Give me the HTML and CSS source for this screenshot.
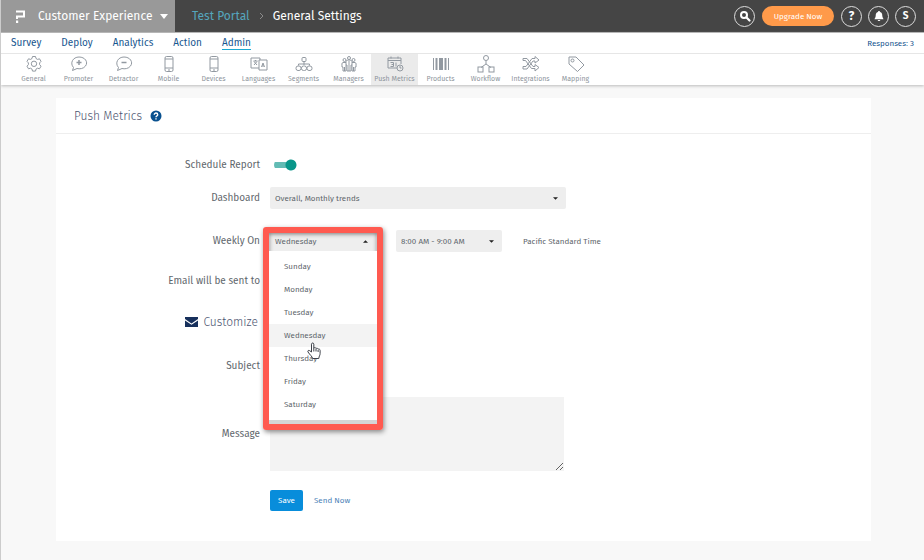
FILE: index.html
```html
<!DOCTYPE html>
<html lang="en">
<head>
<meta charset="utf-8">
<title>General Settings</title>
<link rel="stylesheet" href="styles.css">
</head>
<body>
<header class="topbar">
  <button class="product" type="button">
    <svg class="logo" viewBox="0 0 10 13" aria-hidden="true"><path d="M0 1.500h8v5H1v2.500" fill="none" stroke="#fff" stroke-width="2"/><path d="M0 10.500h2.200V13H0z" fill="#fff"/></svg>
    <span>Customer Experience</span>
    <svg class="down" viewBox="0 0 8 5" aria-hidden="true"><path d="M0 0h8L4 5z" fill="#fff"/></svg>
  </button>
  <nav class="crumbs" aria-label="Breadcrumb">
    <a href="#">Test Portal</a>
    <svg class="sep" viewBox="0 0 5 8" aria-hidden="true"><path d="M1 1l3 3-3 3" fill="none" stroke="#8a8a8a" stroke-width="1"/></svg>
    <span>General Settings</span>
  </nav>
  <div class="tools">
    <button class="round" type="button" aria-label="Search"><svg viewBox="0 0 12 12"><circle cx="5" cy="5" r="3" fill="none" stroke="#fff" stroke-width="2"/><path d="M7.500 7.500l3 3" stroke="#fff" stroke-width="2.200" stroke-linecap="round"/></svg></button>
    <button class="upgrade" type="button">Upgrade Now</button>
    <button class="round help" type="button">?</button>
    <button class="round" type="button" aria-label="Notifications"><svg viewBox="0 0 12 12"><path d="M6 1c-.7 0-1 .5-1 1C3 2.500 2.800 4 2.700 6 2.500 8 1.500 8.500 1.500 9.300h9C10.500 8.500 9.500 8 9.300 6 9.200 4 9 2.500 7 2c0-.5-.3-1-1-1zM4.700 9.900h2.600c0 1.500-2.600 1.500-2.600 0z" fill="#fff"/></svg></button>
    <button class="round" type="button">S</button>
  </div>
</header>
<div class="menus">
  <nav class="tabs" aria-label="Main">
    <a href="#">Survey</a><a href="#">Deploy</a><a href="#">Analytics</a><a href="#">Action</a><a href="#" class="current">Admin</a>
    <span class="responses">Responses: 3</span>
  </nav>
  <nav class="iconbar" aria-label="Admin">
    <a href="#"><svg viewBox="0 0 18 18"><path d="M7.500 1.500h3l.5 2 1.500.9 2-.6 1.500 2.600-1.400 1.500v1.700l1.400 1.600-1.500 2.600-2-.6-1.500.9-.5 2h-3l-.5-2-1.500-.9-2 .6L2 11.200l1.400-1.600V7.900L2 6.400l1.500-2.600 2 .6L7 3.500z"/><circle cx="9" cy="8.800" r="2.700"/></svg>General</a>
    <a href="#"><svg viewBox="0 0 18 18"><path d="M3.500 12.500C-.5 8 3 2 9 2s9.500 5 6.500 9c-2 2.800-6 3.200-8.500 2.500L2.500 15.500z"/><path d="M9 5v5M6.500 7.500h5" stroke-width="1.500"/></svg>Promoter</a>
    <a href="#"><svg viewBox="0 0 18 18"><path d="M3.500 12.500C-.5 8 3 2 9 2s9.500 5 6.500 9c-2 2.800-6 3.200-8.500 2.500L2.500 15.500z"/><path d="M6.500 7.500h5" stroke-width="1.500"/></svg>Detractor</a>
    <a href="#"><svg viewBox="0 0 18 18"><rect x="5" y="1.500" width="8" height="15" rx="1.500"/><path d="M5 4h8M5 13h8M8 15h2"/></svg>Mobile</a>
    <a href="#"><svg viewBox="0 0 18 18"><rect x="5" y="1.500" width="8" height="15" rx="1.500"/><path d="M5 4h8M5 13h8M8 15h2"/></svg>Devices</a>
    <a href="#"><svg viewBox="0 0 18 18"><path d="M9 13H1V3h9v2M9 5h8v10H9z"/><path d="M3.500 6h4M5.500 5v1M7 6.500L4 10M4 6.500L7 10M11.500 12l1.500-4 1.500 4M12 11h2"/></svg>Languages</a>
    <a href="#"><svg viewBox="0 0 18 18"><rect x="7" y="2.500" width="4" height="4" rx="1"/><path d="M9 6.500V10M3.500 10.500V9h11v1.500"/><rect x="1" y="11" width="5" height="4.500" rx="2"/><rect x="6.500" y="11" width="5" height="4.500" rx="2"/><rect x="12" y="11" width="5" height="4.500" rx="2"/></svg>Segments</a>
    <a href="#"><svg viewBox="0 0 18 18"><circle cx="9" cy="3" r="1.500"/><circle cx="4.500" cy="5" r="1.500"/><circle cx="13.500" cy="5" r="1.500"/><path d="M7 16V10H6V6.500c0-2 6-2 6 0V10h-1v6zM9 6v10M6 7.500H3C1.500 8 2 9 2 12h1v4h3v-6M12 7.500h3c1.500.5 1 1.500 1 4.500h-1v4h-3v-6M4.500 12v4M13.500 12v4"/></svg>Managers</a>
    <a href="#" class="active"><svg viewBox="0 0 18 18"><path d="M11 13H2V3h13v6M2 5.500h13M5 1.500v2M12 1.500v2M4.500 7.500h3v4h-3M5.500 9.500h2M10 7.500v4"/><circle cx="14" cy="13" r="3"/><path d="M14 11v2h1.500"/></svg>Push Metrics</a>
    <a href="#"><svg viewBox="0 0 18 18"><path d="M1.500 3v12M16.500 3v12"/><path d="M4.500 3v12" stroke-width="2"/><path d="M9 3v12" stroke-width="4"/><path d="M13.500 3v12" stroke-width="2"/></svg>Products</a>
    <a href="#"><svg viewBox="0 0 18 18"><circle cx="9" cy="3" r="2.500"/><path d="M9 5.500V9l-5 3.500M9 9l5 3.500"/><rect x="1" y="12" width="5" height="5"/><rect x="12" y="12" width="5" height="5"/></svg>Workflow</a>
    <a href="#"><svg viewBox="0 0 18 18"><path d="M1 3.500h4l6 8h2v-2l4 3-4 3.500v-2.500H9.500l-6-8H1zM1 11.500h3l6-8h3V1.500L17 5l-4 3V6h-2l-6 8H1z"/></svg>Integrations</a>
    <a href="#"><svg viewBox="0 0 18 18"><path d="M2 2h7l8 8-6.500 6.500L2 9z"/><circle cx="5.500" cy="5.500" r="1.500"/></svg>Mapping</a>
  </nav>
</div>
<main class="card">
  <h1 class="title">Push Metrics <svg viewBox="0 0 12 12" role="img" aria-label="Help"><circle cx="6" cy="6" r="5.500" fill="#08508f"/><path d="M4.300 4.700c0-2.300 3.400-2.200 3.400 0C7.700 6 6 6 6 7.200M6 8.200v1.300" fill="none" stroke="#fff" stroke-width="1.400"/></svg></h1>
  <form class="form">
    <label for="schedule">Schedule Report</label>
    <div class="field"><input class="switch" id="schedule" type="checkbox" role="switch" checked></div>
    <label for="dashboard">Dashboard</label>
    <div class="field"><select class="select wide" id="dashboard"><option>Overall, Monthly trends</option></select></div>
    <label for="day">Weekly On</label>
    <div class="field">
      <div class="daypick">
        <button class="select open" id="day" type="button" aria-haspopup="listbox" aria-expanded="true">Wednesday</button>
        <div class="frame">
          <ul class="options" role="listbox">
            <li role="option">Sunday</li><li role="option">Monday</li><li role="option">Tuesday</li>
            <li role="option" class="hover" aria-selected="true">Wednesday
              <svg class="hand" viewBox="0 0 14 18" aria-hidden="true"><path d="M4.500 10V2.200c0-1.600 2.300-1.600 2.300 0V6c.8-.8 2-.5 2.200.5.800-.6 2-.2 2.100.7.900-.5 2 .1 2 1.100v3.200c0 2-1.100 2.500-1.300 5H5.600C5.300 14.500 3 13 1 10c-.7-1.300.8-2.200 1.700-1.300z" fill="#fff" stroke="#3c4048"/><path d="M6.800 6v3.500M9 7v2.500M11.100 8v2" stroke="#3c4048"/></svg>
            </li>
            <li role="option">Thursday</li><li role="option">Friday</li><li role="option">Saturday</li>
          </ul>
        </div>
      </div>
      <select class="select time" aria-label="Time"><option>8:00 AM - 9:00 AM</option></select>
      <span class="zone">Pacific Standard Time</span>
    </div>
    <span class="label">Email will be sent to</span>
    <div class="field"></div>
    <h2 class="customize"><svg viewBox="0 0 13 10" aria-hidden="true"><path d="M0 0h13v2L6.500 6.500 0 2zM0 3.500l6.500 4.300L13 3.500V10H0z" fill="#17305c"/></svg>Customize</h2>
    <div class="field"></div>
    <span class="label">Subject</span>
    <div class="field"></div>
    <label for="message">Message</label>
    <div class="field"><textarea class="message" id="message"></textarea></div>
    <div class="actions"><button class="save" type="button">Save</button><a href="#">Send Now</a></div>
  </form>
</main>
</body>
</html>
```
FILE: styles.css
```css
* { box-sizing: border-box; }
body {
  margin: 0;
  min-height: 100vh;
  border-left: 1px solid #ccc;
  background: #f8f8f8;
  color: #5f676d;
  font-family: "Fira Sans", "Noto Sans", sans-serif;
  font-size: 10px;
}
a { color: inherit; text-decoration: none; }
button, select, textarea { font: inherit; color: inherit; border: 0; }

.topbar {
  display: flex;
  height: 33px;
  background: #454545;
  color: #fff;
  border-bottom: 1px solid #b5b5b5;
  font-size: 12px;
}
.product {
  display: flex;
  align-items: center;
  width: 174px;
  padding: 0 7px 0 15px;
  background: #999;
  color: #fff;
}
.logo { width: 10px; height: 13px; margin-right: 12px; }
.down { width: 8px; height: 5px; margin-left: auto; }
.crumbs { display: flex; align-items: center; gap: 9px; padding-left: 17px; }
.crumbs a { color: #55a5bd; }
.sep { width: 5px; height: 8px; }
.tools { display: flex; align-items: center; gap: 6px; margin-left: auto; padding-right: 8px; }
.round {
  display: flex;
  align-items: center;
  justify-content: center;
  width: 21px;
  height: 21px;
  padding: 0;
  border: 1px solid #ddd;
  border-radius: 50%;
  background: none;
  color: #fff;
  font-size: 10px;
  font-weight: 700;
}
.round svg { width: 12px; height: 12px; }
.help { font-size: 12px; }
.upgrade {
  height: 20px;
  width: 72px;
  margin: 0 1px;
  padding: 0;
  border-radius: 10px;
  background: #ff9a4a;
  color: #fff;
  font-size: 8px;
}

.menus { background: #fff; box-shadow: 0 1px 3px #bbb; }
.tabs {
  display: flex;
  align-items: center;
  gap: 20px;
  height: 21px;
  padding: 0 10px;
  border-bottom: 1px solid #e6e6e6;
  color: #17568f;
  font-size: 10px;
}
.tabs a { line-height: 12px; border-bottom: 1px solid transparent; }
.tabs .current { border-color: #1ba8d0; }
.responses { margin-left: auto; font-size: 8px; }
.iconbar { display: flex; height: 31px; padding-left: 10px; }
.iconbar a {
  display: flex;
  flex-direction: column;
  align-items: center;
  gap: 1px;
  width: 45px;
  padding-top: 1px;
  color: #8e959c;
  font-size: 7px;
  line-height: 10px;
  white-space: nowrap;
}
.iconbar svg { width: 18px; height: 18px; fill: none; stroke: #9299a1; stroke-width: 1; }
.iconbar .active { width: 47px; background: #ebebeb; }

.card { margin: 13px 53px 18px 55px; background: #fff; }
.title {
  display: flex;
  align-items: center;
  gap: 8px;
  height: 36px;
  margin: 0;
  padding-left: 18px;
  border-bottom: 1px solid #eee;
  color: #4c5470;
  font-size: 12px;
  font-weight: 300;
}
.title svg { width: 12px; height: 12px; }
.form {
  display: grid;
  grid-template-columns: 204px 1fr;
  grid-template-rows: 22px 44px 42px 38px 44px 44px 91px 42px;
  align-items: center;
  column-gap: 10px;
  padding: 20px 0;
}
.form > label, .label { text-align: right; }
.field { display: flex; align-items: center; }
.switch {
  appearance: none;
  width: 23px;
  height: 12px;
  margin: 0 4px;
  background: radial-gradient(circle at 17px 6px, #08968a 5px, transparent 6px), linear-gradient(#62bbb4, #62bbb4) 0 3px / 18px 6px no-repeat;
  border-radius: 6px;
}
.select {
  appearance: none;
  height: 22px;
  padding: 0 5px;
  border-radius: 2px;
  background: #eee url("data:image/svg+xml,%3Csvg xmlns='http://www.w3.org/2000/svg' viewBox='0 0 6 3'%3E%3Cpath d='M0 0h6L3 3z' fill='%23222'/%3E%3C/svg%3E") right 8px center / 5px 3px no-repeat;
  font-size: 8px;
  text-align: left;
}
.wide { width: 296px; }
.time { width: 106px; margin-left: 20px; }
.zone { margin-left: 21px; font-size: 8px; }
.daypick { position: relative; width: 106px; }
.open {
  width: 106px;
  background-image: url("data:image/svg+xml,%3Csvg xmlns='http://www.w3.org/2000/svg' viewBox='0 0 6 3'%3E%3Cpath d='M0 3h6L3 0z' fill='%23222'/%3E%3C/svg%3E");
}
.frame {
  position: absolute;
  top: -3px;
  left: -7px;
  z-index: 1;
  width: 120px;
  padding-top: 18px;
  border: 6px solid #ff5a50;
  border-radius: 3px;
  box-shadow: 1px 2px 5px #888, inset 0 1px 4px #777;
}
.options { margin: 0; padding: 4px 0; background: #fff; list-style: none; border-bottom: 4px solid #d5d5d5; }
.options li { position: relative; height: 23px; padding-left: 15px; line-height: 23px; font-size: 8px; }
.hover { background: #f3f3f3; }
.hand { position: absolute; top: 18px; left: 38px; z-index: 2; width: 14px; height: 18px; fill: none; }
.customize {
  display: flex;
  align-items: center;
  justify-content: flex-end;
  gap: 5px;
  margin: 0;
  padding-right: 2px;
  color: #4c5470;
  font-size: 12px;
  font-weight: 300;
}
.customize svg { width: 13px; height: 10px; }
.message { width: 294px; height: 74px; background: #f3f3f3; resize: both; }
.actions { grid-column: 2; display: flex; align-items: center; gap: 11px; font-size: 8px; color: #4d83b8; }
.save { width: 33px; height: 21px; padding: 0; border-radius: 2px; background: #088ddb; color: #fff; }
```
